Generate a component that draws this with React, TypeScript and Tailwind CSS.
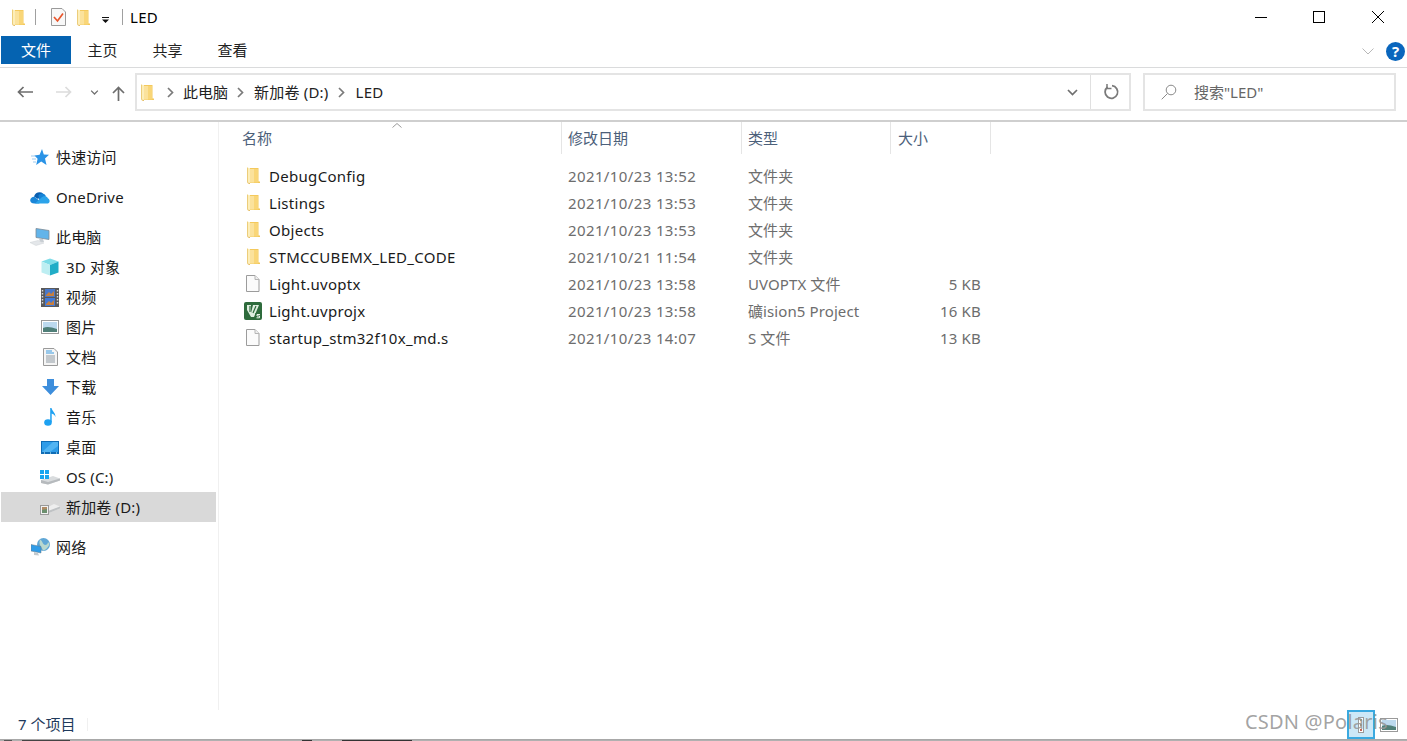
import type { ReactNode } from 'react'

const font = "font-['Noto_Sans','Noto_Sans_CJK_SC',sans-serif]"

function Folder({ className = '' }: { className?: string }) {
  return (
    <svg viewBox="0 0 13 17" className={`w-[13px] h-[17px] ${className}`}>
      <path d="M3 1 L11.5 1 L11.5 14.5 L13 14.5 L13 16 L3 16 Z" fill="#f4c95c" />
      <path d="M3 2 L11 2 L11 15.5 L3 15.5 Z" fill="#f9d678" />
      <path d="M3 2 L7 2 L7 15.5 L3 15.5 Z" fill="#fbe29c" />
      <path d="M0 .5 L3 1.2 L3 16 L0 15.2 Z" fill="#fdeeb9" />
      <path d="M0 .5 L.8 .7 L.8 15.4 L0 15.2 Z" fill="#e8c56a" />
      <path d="M0 15.2 L3 16 L3 17 L1 16.5 Z" fill="#e2b752" />
    </svg>
  )
}

function FileIcon() {
  return (
    <svg viewBox="0 0 15 17" className="w-[15px] h-[17px]">
      <path d="M1.5 .5 H10 L14 4.5 V16.5 H1.5 Z" fill="#fbfbfb" stroke="#9c9c9c" />
      <path d="M10 .5 V4.5 H14" fill="#efefef" stroke="#b5b5b5" />
    </svg>
  )
}

function UvIcon() {
  return (
    <svg viewBox="0 0 18 18" className="w-[18px] h-[18px]">
      <rect x="0" y="0" width="18" height="18" rx="2" fill="#2e6b3c" />
      <path d="M3 3 H7 V11 L9 3 H15 L10 15 H7 L3 8 Z" fill="#dfeee0" />
      <path d="M6 4 L6 10 M12 4 L9 11" stroke="#2e6b3c" strokeWidth="1.2" fill="none" />
      <rect x="11" y="11" width="6" height="6" rx="1" fill="#2e6b3c" />
      <path d="M16 12.5 H13 V14 H15.5 V15.8 H12.5" stroke="#e8f3e8" strokeWidth="1" fill="none" />
    </svg>
  )
}

function StarIcon() {
  return (
    <svg viewBox="0 0 18 17" className="w-[18px] h-[17px]">
      <path d="M11 0 L12.8 5.6 L18 5.8 L14 9.5 L15.5 16 L10.2 12.6 L5.2 16 L6.6 9.8 L3.4 6.4 L8.6 5.8 Z" fill="#2a93e6" />
      <path d="M0 7 H4 M1 10 H5 M2 13 H5" stroke="#9cc9ee" strokeWidth="1" />
    </svg>
  )
}

function CloudIcon() {
  return (
    <svg viewBox="0 0 20 13" className="w-[20px] h-[13px]">
      <path d="M4 5.5 C5 1.5 10 0 13 2.5 L8 8 Z" fill="#0a5fb0" />
      <path d="M8.5 4 C11 1.5 15 2 16 5.5 L9 9 Z" fill="#1582d6" />
      <path d="M4.5 12.5 C1.5 12.5 0 10.8 .2 9 C.5 6.8 2.5 5.5 4.5 5.8 L11 11 L9 12.5 Z" fill="#1a86d8" />
      <path d="M5 12.5 L11 7 C13 4.5 17 4.5 18 7.5 C19.8 8 20.5 11.5 18 12.5 Z" fill="#2ba3ea" />
    </svg>
  )
}

function PcIcon() {
  return (
    <svg viewBox="0 0 20 18" className="w-[20px] h-[18px]">
      <path d="M6 .5 L19 2.5 L19 11.5 L6 9.5 Z" fill="#62b4ea" stroke="#7d8a95" strokeWidth=".8" />
      <path d="M9 10.5 L10 14 L14 14 L13 11 Z" fill="#c8ced3" />
      <path d="M0 14.5 L8 12.5 L14 15 L6 17.5 Z" fill="#e4e7ea" stroke="#cdd1d5" strokeWidth=".5" />
    </svg>
  )
}

function CubeIcon() {
  return (
    <svg viewBox="0 0 18 18" className="w-[18px] h-[18px]">
      <path d="M9 .5 L17.5 3.5 L9 7 L.5 3.5 Z" fill="#7fdde8" />
      <path d="M.5 3.5 L9 7 L9 17.5 L.5 14.5 Z" fill="#bdeef2" />
      <path d="M17.5 3.5 L9 7 L9 17.5 L17.5 14.5 Z" fill="#21adc7" />
    </svg>
  )
}

function VideoIcon() {
  return (
    <svg viewBox="0 0 18 19" className="w-[18px] h-[19px]">
      <rect width="18" height="19" fill="#59595b" />
      <rect x="4" y="1" width="10" height="8" fill="#4a78c8" />
      <rect x="4" y="10" width="10" height="8" fill="#4279d6" />
      <path d="M5 7 L8 4 L10 6 L13 3 V8 H5 Z" fill="#c97f3d" />
      <path d="M5 16 L8 13 L10 15 L13 12 V17 H5 Z" fill="#c97f3d" />
      <path d="M1.5 2 V17 M16.5 2 V17" stroke="#dcdcdc" strokeWidth="1.4" strokeDasharray="1.6 1.4" />
    </svg>
  )
}

function PictureIcon() {
  return (
    <svg viewBox="0 0 18 14" className="w-[18px] h-[14px]">
      <rect x=".5" y=".5" width="17" height="13" fill="#fff" stroke="#9a9a9a" />
      <rect x="2" y="2" width="14" height="10" fill="#bcd9ee" />
      <path d="M2 8 C6 6 10 7 16 9 V12 H2 Z" fill="#4f7f78" />
    </svg>
  )
}

function DocIcon() {
  return (
    <svg viewBox="0 0 15 18" className="w-[15px] h-[18px]">
      <path d="M.5 .5 H11 L14.5 4 V17.5 H.5 Z" fill="#f5f5f5" stroke="#9a9a9a" />
      <path d="M3 3 H9 M3 5 H11" stroke="#3d9ce0" strokeWidth="1.1" />
      <path d="M3 8 H12 M3 10 H12 M3 12 H12 M3 14 H12" stroke="#8f9aa3" strokeWidth="1" />
    </svg>
  )
}

function DownIcon() {
  return (
    <svg viewBox="0 0 17 16" className="w-[17px] h-[16px]">
      <path d="M5 0 H12 V7 H17 L8.5 16 L0 7 H5 Z" fill="#3d8edc" />
    </svg>
  )
}

function MusicIcon() {
  return (
    <svg viewBox="0 0 12 18" className="w-[12px] h-[18px]">
      <ellipse cx="4" cy="14.5" rx="3.8" ry="3.2" fill="#1ea1f1" />
      <path d="M6.2 14 V0 H7.5 C8 3 11.5 4.5 11.5 9 C10.5 6.5 9 6 7.7 5.5 V14 Z" fill="#1ea1f1" />
    </svg>
  )
}

function DesktopIcon() {
  return (
    <svg viewBox="0 0 18 13" className="w-[18px] h-[13px]">
      <rect width="18" height="13" fill="#0f6cb5" />
      <rect x="1" y="1" width="16" height="10" fill="#2f9ce8" />
      <path d="M1 11 L12 1 H17 V5 L9 11 Z" fill="#52b4f2" />
      <path d="M3 12 H4 M9 12 H10 M15 12 H16" stroke="#dff" />
    </svg>
  )
}

function DriveC() {
  return (
    <svg viewBox="0 0 20 15" className="w-[20px] h-[15px]">
      <path d="M1 10 L13 6 L20 8.5 L20 10.5 L8 14.5 L1 13 Z" fill="#d9dcde" />
      <path d="M1 10 L8 12 L20 8.5 L20 10.5 L8 14.5 L1 13 Z" fill="#b6babd" />
      <rect x="0" y="0" width="4" height="4" fill="#17a5f0" />
      <rect x="5" y="0" width="4" height="4" fill="#17a5f0" />
      <rect x="0" y="5" width="4" height="4" fill="#17a5f0" />
      <rect x="5" y="5" width="4" height="4" fill="#17a5f0" />
    </svg>
  )
}

function DriveD() {
  return (
    <svg viewBox="0 0 20 15" className="w-[20px] h-[15px]">
      <path d="M4 9 L14 4 L20 6.5 L20 8.5 L9 13 L4 12 Z" fill="#eeeeee" />
      <path d="M8 11 L20 6.5 L20 8.5 L9 13 Z" fill="#bfc2c4" />
      <rect x=".5" y="5.5" width="8" height="9" fill="#f2f2f2" stroke="#9a9a9a" />
      <rect x="2" y="7" width="5" height="6" fill="#6b8f6e" />
      <path d="M2 7 H7 V9 L2 10 Z" fill="#b08c66" />
    </svg>
  )
}

function NetworkIcon() {
  return (
    <svg viewBox="0 0 19 18" className="w-[19px] h-[18px]">
      <circle cx="12.5" cy="6.5" r="6.5" fill="#5fa7d6" />
      <path d="M9 1.5 C12 3 11 6 14 7 C16 7 17 5 17 4 L18.5 6 C17 10 14 12.5 12 12.5 C11 9 7 7 9 1.5 Z" fill="#b8d8cf" />
      <path d="M0 6.5 L10 8.5 V15 L0 13 Z" fill="#2f9ce8" stroke="#6b7a85" strokeWidth=".5" />
      <path d="M3 14 L7 15 L8 17.5 L3 17 Z" fill="#c3c9cd" />
    </svg>
  )
}

function Chevron({ className = '' }: { className?: string }) {
  return (
    <svg viewBox="0 0 7 11" className={`w-[7px] h-[11px] ${className}`}>
      <path d="M1 1 L5.5 5.5 L1 10" fill="none" stroke="#7a7a7a" strokeWidth="1.7" />
    </svg>
  )
}

function DownChevron({ className = '' }: { className?: string }) {
  return (
    <svg viewBox="0 0 11 7" className={`w-[11px] h-[7px] ${className}`}>
      <path d="M1 1 L5.5 5.5 L10 1" fill="none" stroke="#6f6f6f" strokeWidth="1.7" />
    </svg>
  )
}

function TitleBar() {
  return (
    <div className="h-9 pb-[2px] flex items-center shrink-0">
      <div className="ml-3 flex items-center">
        <Folder />
      </div>
      <div className="ml-[10px] w-px h-4 bg-[#a0a0a0]" />
      <svg viewBox="0 0 15 18" className="ml-[15px] w-[15px] h-[18px]">
        <path d="M.5 .5 H11 L14.5 4 V17.5 H.5 Z" fill="#f8f8f8" stroke="#9a9a9a" />
        <path d="M3 9 L6.5 13 L12 5.5" fill="none" stroke="#e8552b" strokeWidth="1.7" />
      </svg>
      <Folder className="ml-[11px]" />
      <svg viewBox="0 0 7 6" className="ml-[12px] mt-[5px] w-[7px] h-[6px]">
        <path d="M0 0 H7 V1 H0 Z M0 2.5 H7 L3.5 6 Z" fill="#111" />
      </svg>
      <div className="ml-[13px] w-px h-4 bg-[#a0a0a0]" />
      <span className="ml-[7px] text-[15px] text-black tracking-[0.3px]">LED</span>
      <div className="ml-auto flex items-center">
        <button className="w-[58.5px] h-8 flex items-center justify-center">
          <span className="w-3 h-px bg-black" />
        </button>
        <button className="w-[58.5px] h-8 flex items-center justify-center">
          <span className="w-3 h-3 border border-black" />
        </button>
        <button className="w-[58.5px] h-8 flex items-center justify-center">
          <svg viewBox="0 0 12 12" className="w-3 h-3">
            <path d="M0 0 L12 12 M12 0 L0 12" stroke="#000" strokeWidth="1" />
          </svg>
        </button>
      </div>
    </div>
  )
}

function RibbonTabs() {
  return (
    <div className="h-[32px] flex items-start pl-px border-b border-[#dadbdc] shrink-0">
      <div className="w-[70px] h-[28px] bg-[#0563b1] text-white text-[15px] flex items-center justify-center mr-[-1px]">文件</div>
      {['主页', '共享', '查看'].map((t) => (
        <div key={t} className="w-[65px] h-[28px] text-[15px] text-[#222] flex items-center justify-center">{t}</div>
      ))}
      <div className="ml-auto mr-[2px] flex items-center h-[28px] gap-[12px] mt-px">
        <svg viewBox="0 0 12 7" className="w-3 h-[7px]">
          <path d="M.5 .5 L6 6 L11.5 .5" fill="none" stroke="#b8b8b8" />
        </svg>
        <div className="w-[19px] h-[19px] rounded-full bg-[#0a66bd] text-white text-[15px] font-bold flex items-center justify-center leading-none">?</div>
      </div>
    </div>
  )
}

function AddressBar() {
  return (
    <div className="h-[54px] flex items-start shrink-0 border-b-2 border-[#cfcfcf] pt-[5px]">
      <div className="w-[135px] h-[38px] flex items-center relative shrink-0">
        <svg viewBox="0 0 16 12" className="ml-[17px] w-4 h-3">
          <path d="M16 6 H1.5 M6.5 1 L1.5 6 L6.5 11" fill="none" stroke="#6d6d6d" strokeWidth="1.7" />
        </svg>
        <svg viewBox="0 0 16 12" className="ml-[23px] w-4 h-3">
          <path d="M0 6 H14.5 M9.5 1 L14.5 6 L9.5 11" fill="none" stroke="#dcdcdc" strokeWidth="1.7" />
        </svg>
        <DownChevron className="ml-[17px] scale-75" />
        <svg viewBox="0 0 13 15" className="ml-[12px] mt-[3px] w-[13px] h-[15px]">
          <path d="M6.5 15 V1.5 M1 7 L6.5 1.5 L12 7" fill="none" stroke="#6d6d6d" strokeWidth="1.7" />
        </svg>
      </div>
      <div className="w-[996px] h-[38px] border-2 border-[#e4e4e4] flex items-center text-[15px] text-[#222] shrink-0">
        <Folder className="ml-[4px]" />
        <Chevron className="ml-[13px]" />
        <span className="ml-[9px]">此电脑</span>
        <Chevron className="ml-[9px]" />
        <span className="ml-[10px] tracking-[0.2px]">新加卷 (D:)</span>
        <Chevron className="ml-[9px]" />
        <span className="ml-[11px] tracking-[0.3px]">LED</span>
        <DownChevron className="ml-auto mr-[12px]" />
        <div className="w-px h-full bg-[#e0e0e0]" />
        <svg viewBox="0 0 16 16" className="ml-[13px] mr-[9px] w-[16px] h-[16px]">
          <path d="M3.5 3 A6.3 6.3 0 1 0 8 1.7" fill="none" stroke="#7a7a7a" strokeWidth="1.8" />
          <path d="M3 0 V4.5 H7.5" fill="none" stroke="#7a7a7a" strokeWidth="1.5" />
        </svg>
      </div>
      <div className="ml-3 w-[253px] h-[38px] border-2 border-[#e4e4e4] flex items-center text-[15px] text-[#666] shrink-0">
        <svg viewBox="0 0 16 16" className="ml-[16px] w-4 h-4">
          <circle cx="10" cy="6" r="4.8" fill="none" stroke="#8a8a8a" />
          <path d="M6.5 9.5 L.7 15.3" stroke="#8a8a8a" />
        </svg>
        <span className="ml-[17px]">搜索"LED"</span>
      </div>
    </div>
  )
}

const navItems: { label: string; icon: ReactNode; indent?: boolean; gap?: boolean; active?: boolean }[] = [
  { label: '快速访问', icon: <StarIcon /> },
  { label: 'OneDrive', icon: <CloudIcon />, gap: true },
  { label: '此电脑', icon: <PcIcon />, gap: true },
  { label: '3D 对象', icon: <CubeIcon />, indent: true },
  { label: '视频', icon: <VideoIcon />, indent: true },
  { label: '图片', icon: <PictureIcon />, indent: true },
  { label: '文档', icon: <DocIcon />, indent: true },
  { label: '下载', icon: <DownIcon />, indent: true },
  { label: '音乐', icon: <MusicIcon />, indent: true },
  { label: '桌面', icon: <DesktopIcon />, indent: true },
  { label: 'OS (C:)', icon: <DriveC />, indent: true },
  { label: '新加卷 (D:)', icon: <DriveD />, indent: true, active: true },
  { label: '网络', icon: <NetworkIcon />, gap: true },
]

function Sidebar() {
  return (
    <div className="w-[219px] h-[588px] border-r border-[#f0f0f0] pt-5 pl-px pr-[2px] shrink-0">
      {navItems.map((item) => (
        <div
          key={item.label}
          className={`h-[30px] flex items-center text-[15px] text-[#1a1a1a] ${item.gap ? 'mt-[10px]' : ''} ${item.active ? 'bg-[#d9d9d9]' : ''} ${item.indent ? 'pl-[39px]' : 'pl-[29px]'}`}
        >
          <span className="w-[20px] flex justify-center shrink-0">{item.icon}</span>
          <span className="ml-[6px] tracking-[0.15px]">{item.label}</span>
        </div>
      ))}
    </div>
  )
}

const rows = [
  { name: 'DebugConfig', date: '2021/10/23 13:52', type: '文件夹', size: '', icon: 'folder' },
  { name: 'Listings', date: '2021/10/23 13:53', type: '文件夹', size: '', icon: 'folder' },
  { name: 'Objects', date: '2021/10/23 13:53', type: '文件夹', size: '', icon: 'folder' },
  { name: 'STMCCUBEMX_LED_CODE', date: '2021/10/21 11:54', type: '文件夹', size: '', icon: 'folder' },
  { name: 'Light.uvoptx', date: '2021/10/23 13:58', type: 'UVOPTX 文件', size: '5 KB', icon: 'file' },
  { name: 'Light.uvprojx', date: '2021/10/23 13:58', type: '礦ision5 Project', size: '16 KB', icon: 'uv' },
  { name: 'startup_stm32f10x_md.s', date: '2021/10/23 14:07', type: 'S 文件', size: '13 KB', icon: 'file' },
]

function FileList() {
  return (
    <div className="flex-1 relative">
      <svg viewBox="0 0 10 5" className="absolute left-[173px] top-[1px] w-[10px] h-[5px]">
        <path d="M.5 4.5 L5 .5 L9.5 4.5" fill="none" stroke="#9a9a9a" />
      </svg>
      <div className="h-[32px] flex text-[15px] text-[#4c607a]">
        <div className="w-[343px] pl-[23px] flex items-center border-r border-[#e5e5e5]">名称</div>
        <div className="w-[180px] pl-[6px] flex items-center border-r border-[#e5e5e5]">修改日期</div>
        <div className="w-[149px] pl-[6px] flex items-center border-r border-[#e5e5e5]">类型</div>
        <div className="w-[100px] pl-[7px] flex items-center border-r border-[#e5e5e5]">大小</div>
      </div>
      <div className="pt-[9px]">
        {rows.map((r) => (
          <div key={r.name} className="h-[27px] flex items-center text-[15px]">
            <div className="w-[343px] flex items-center text-[#1a1a1a] tracking-[0.3px]">
              <span className="w-[50px] pl-[26px] flex items-center -mt-[2px]">
                {r.icon === 'folder' && <Folder className="ml-[2px]" />}
                {r.icon === 'file' && <FileIcon />}
                {r.icon === 'uv' && <span className="-ml-[1px] flex"><UvIcon /></span>}
              </span>
              {r.name}
            </div>
            <div className="w-[180px] pl-[6px] text-[#6d6d6d] tracking-[0.38px]">{r.date}</div>
            <div className="w-[149px] pl-[6px] text-[#6d6d6d] tracking-[0.1px]">{r.type}</div>
            <div className="w-[90px] text-right text-[#6d6d6d] tracking-[0.2px]">{r.size}</div>
          </div>
        ))}
      </div>
    </div>
  )
}

function StatusBar() {
  return (
    <>
      <div className="h-[29px] flex items-center relative shrink-0">
        <span className="ml-[18px] text-[15px] text-[#1f3a5c]">7 个项目</span>
        <div className="ml-[12px] w-px h-[13px] bg-[#f0f0f0]" />
        <div className="ml-auto mr-[9px] flex items-center">
          <div className="w-[28px] h-[29px] border-2 border-[#3aa9e0] bg-[#cce8f7] flex items-center justify-center">
            <svg viewBox="0 0 6 16" className="w-[6px] h-4">
              <rect x=".5" y=".5" width="5" height="15" fill="#fff" stroke="#9a9a9a" />
              <path d="M2 3 H4 M2 8 H4" stroke="#7a6a20" strokeWidth="1.5" />
              <path d="M2 13 H4" stroke="#b03020" strokeWidth="1.5" />
            </svg>
          </div>
          <div className="ml-[5px] flex"><PictureIcon /></div>
        </div>
        {/* watermark sits over the status bar */}
        <span className="absolute left-[1245px] top-[-3px] text-[20px] text-[#989898]/90 tracking-[0.2px]">CSDN @Polaris</span>
      </div>
      <div className="h-px bg-[#a8a8a8] shrink-0" />
      {/* cropped remains of the taskbar along the very bottom row */}
      <div className="h-px bg-[#b0b0b0] flex shrink-0">
        <span className="ml-[4px] w-[8px] bg-[#555]" />
        <span className="ml-[10px] w-[48px] bg-[#444]" />
        <span className="ml-[232px] w-[10px] bg-[#333]" />
        <span className="ml-[30px] w-[70px] bg-[#333]" />
      </div>
    </>
  )
}

export default function App() {
  return (
    <div className={`w-[1407px] h-[741px] bg-white flex flex-col overflow-hidden ${font}`}>
      <TitleBar />
      <RibbonTabs />
      <AddressBar />
      <div className="flex flex-1 min-h-0">
        <Sidebar />
        <FileList />
      </div>
      <StatusBar />
    </div>
  )
}
